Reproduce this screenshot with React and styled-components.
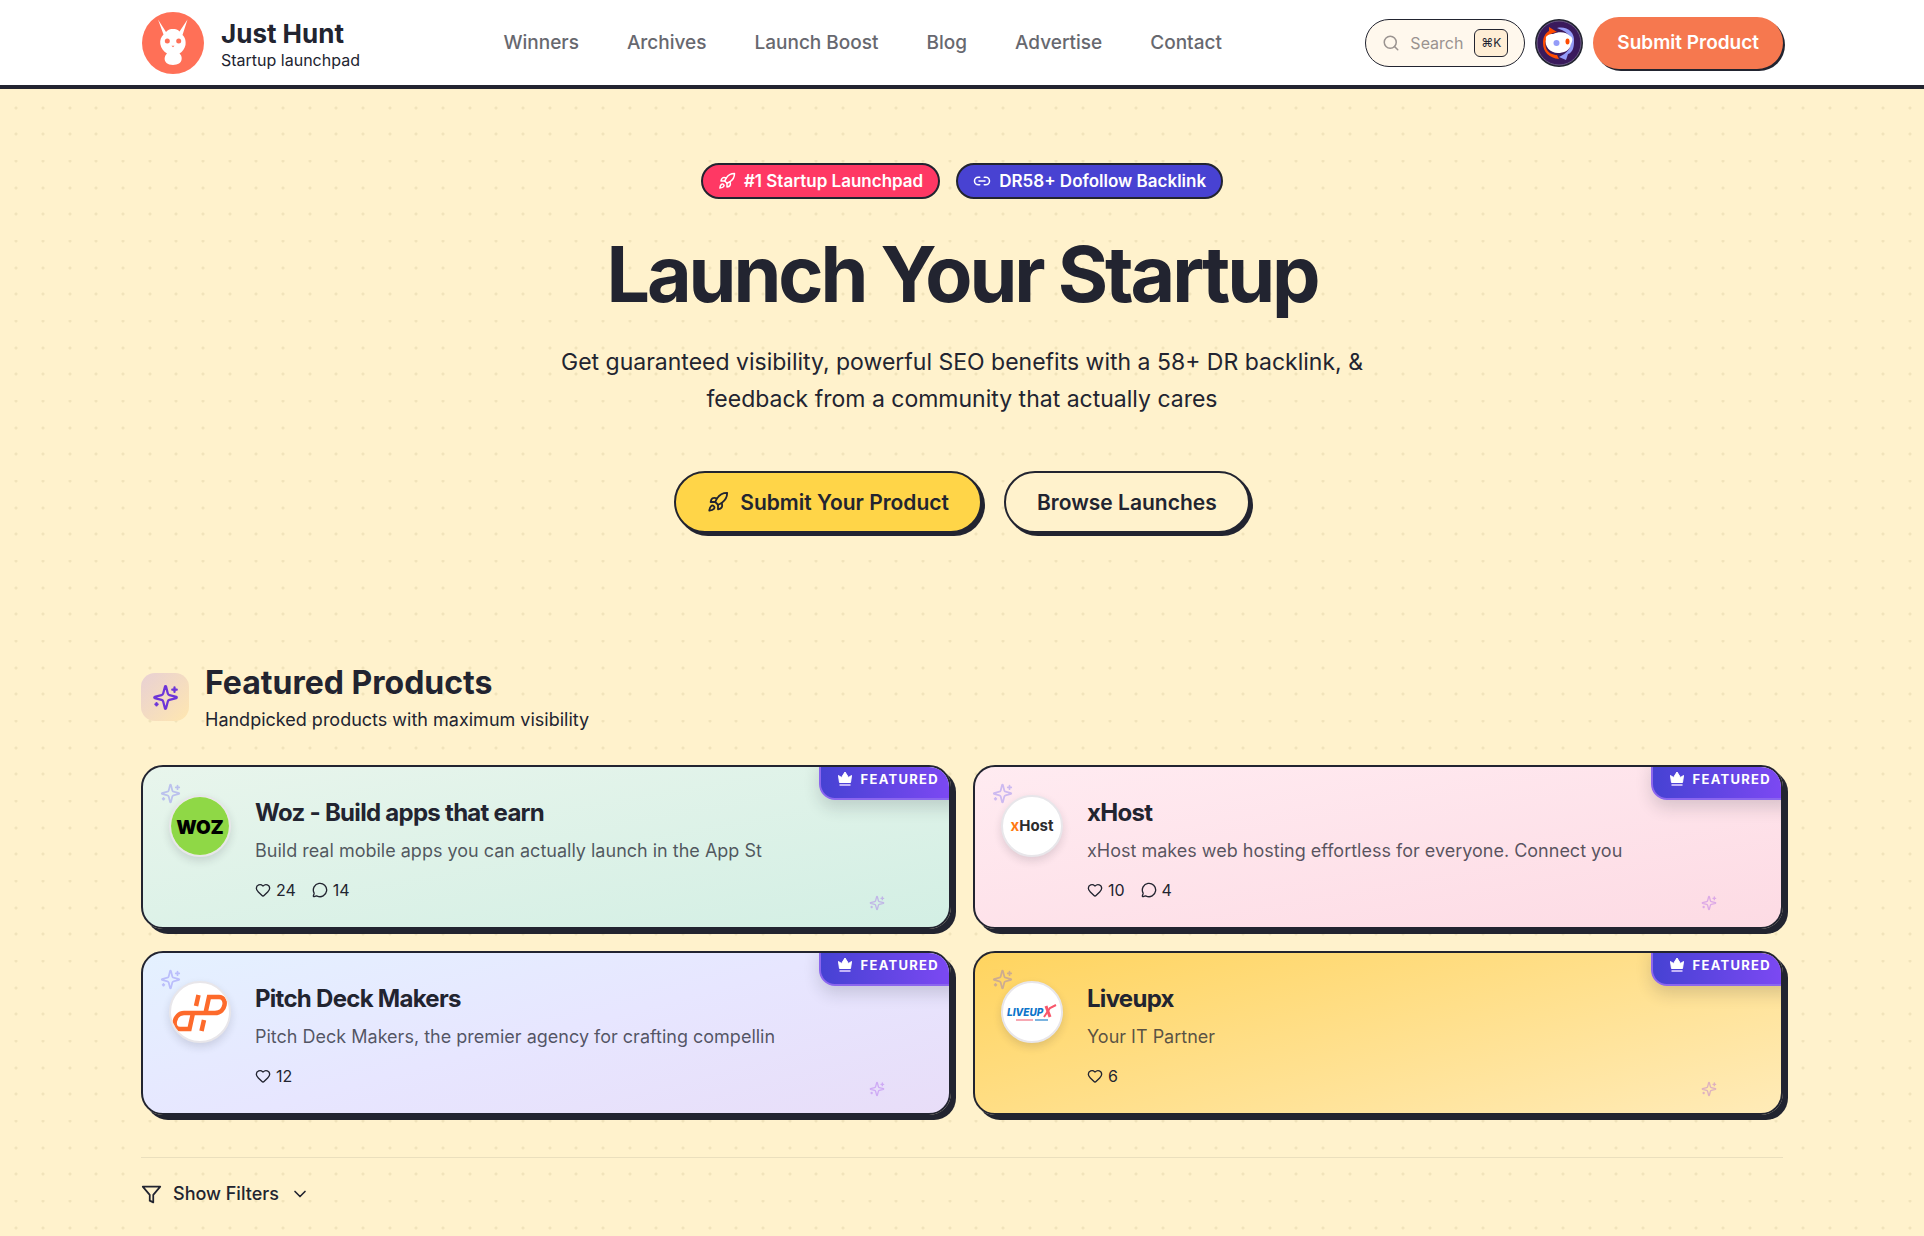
import React from 'react';
import styled, { createGlobalStyle } from 'styled-components';
import { ChevronDown, Heart, Link2, MessageCircle, Rocket, Search } from 'lucide-react';

const ink = '#222430';
const fontStack = "Inter, 'Liberation Sans', sans-serif";

// Three dots per 80px tile in each direction
const dotLayer = [1, 28, 54]
  .flatMap((y) =>
    [16, 43, 70].map(
      (x) =>
        `radial-gradient(circle at ${x}px ${y}px, rgba(120, 100, 40, 0.1) 1px, transparent 2px)`
    )
  )
  .join(',');

const GlobalStyle = createGlobalStyle`
  * {
    box-sizing: border-box;
  }
  body {
    margin: 0;
    min-height: 100vh;
    color: ${ink};
    font-family: ${fontStack};
    background-color: #fff2cc;
    background-image: ${dotLayer};
    background-size: 80px 80px;
    -webkit-font-smoothing: antialiased;
  }
  h1, h2, h3, p, ul {
    margin: 0;
    padding: 0;
  }
  a {
    color: inherit;
    text-decoration: none;
  }
  button, input {
    font-family: inherit;
    color: inherit;
  }
`;

const Container = styled.div`
  width: 100%;
  max-width: 1690px;
  margin: 0 auto;
  padding: 0 24px;
`;

const HeaderStyles = styled.header`
  background: #fff;
  border-bottom: 4px solid ${ink};
`;

const HeaderInner = styled(Container)`
  display: flex;
  align-items: center;
  justify-content: space-between;
  min-height: 85px;
`;

const Brand = styled.a`
  display: flex;
  align-items: center;
  gap: 16px;
  svg {
    width: 64px;
    height: 64px;
  }
`;

const BrandText = styled.span`
  padding-top: 5px;
`;

const BrandName = styled.span`
  display: block;
  font-size: 26px;
  font-weight: 700;
  line-height: 30px;
`;

const BrandTagline = styled.span`
  display: block;
  font-size: 16px;
  line-height: 22px;
`;

const Nav = styled.nav`
  ul {
    display: flex;
    gap: 48px;
    list-style: none;
  }
  a {
    font-size: 19px;
    font-weight: 500;
    color: #67686f;
  }
`;

const HeaderActions = styled.div`
  display: flex;
  align-items: center;
  justify-content: flex-end;
  gap: 10px;
`;

const SearchBox = styled.label`
  display: flex;
  align-items: center;
  width: 160px;
  height: 48px;
  padding: 0 16px;
  color: #9a9390;
  background: #fff8ed;
  border: 1px solid ${ink};
  border-radius: 24px;
  svg {
    flex: none;
  }
  input {
    flex: 1;
    min-width: 0;
    margin-left: 10px;
    padding: 0;
    font-size: 16px;
    color: ${ink};
    background: none;
    border: 0;
    outline: 0;
  }
  input::placeholder {
    color: #9a9390;
    opacity: 1;
  }
  kbd {
    flex: none;
    padding: 0 6px;
    font-family: ${fontStack};
    font-size: 12px;
    line-height: 26px;
    color: ${ink};
    background: #ffeed5;
    border: 1px solid ${ink};
    border-radius: 6px;
  }
`;

const AvatarButton = styled.button`
  width: 48px;
  height: 48px;
  padding: 0;
  background: none;
  border: 0;
  border-radius: 50%;
  svg {
    display: block;
  }
`;

const SubmitLink = styled.a`
  padding: 0 24px;
  font-size: 19px;
  font-weight: 600;
  line-height: 52px;
  white-space: nowrap;
  color: #fff;
  background: #f6784f;
  border-radius: 26px;
  box-shadow: 2px 2px 0 ${ink};
`;

const Hero = styled.section`
  display: flex;
  flex-direction: column;
  align-items: center;
  padding: 74px 0 127px;
  text-align: center;
`;

const HeroBadges = styled.div`
  display: flex;
  gap: 16px;
`;

const HeroBadge = styled.span`
  display: flex;
  align-items: center;
  gap: 8px;
  height: 36px;
  padding: 0 15px;
  font-size: 17px;
  font-weight: 600;
  line-height: 32px;
  color: #fff;
  background: ${(props) => props.$color};
  border: 2px solid ${ink};
  border-radius: 18px;
`;

const HeroTitle = styled.h1`
  margin-top: 32px;
  font-size: 77px;
  font-weight: 700;
  line-height: 86px;
  letter-spacing: -0.04em;
`;

const HeroText = styled.p`
  max-width: 830px;
  margin-top: 27px;
  font-size: 23px;
  line-height: 37px;
`;

const HeroButtons = styled.div`
  display: flex;
  gap: 22px;
  margin-top: 53px;
`;

const HeroButton = styled.a`
  display: flex;
  align-items: center;
  gap: 11px;
  height: 62px;
  padding: 0 31px;
  font-size: 21px;
  font-weight: 600;
  background: ${(props) => (props.$primary ? '#ffd548' : '#fff2cc')};
  border: 2px solid ${ink};
  border-radius: 31px;
  box-shadow: 3px 3px 0 ${ink};
`;

const SectionHead = styled.div`
  display: flex;
  align-items: center;
  gap: 16px;
`;

const SectionIcon = styled.div`
  display: flex;
  align-items: center;
  justify-content: center;
  width: 48px;
  height: 48px;
  color: #6d35d8;
  background: linear-gradient(135deg, #e8d0d4, #ffe7b0);
  border-radius: 14px;
`;

const SectionTitle = styled.h2`
  font-size: 32px;
  font-weight: 700;
  line-height: 46px;
`;

const SectionText = styled.p`
  font-size: 18px;
  line-height: 28px;
`;

const CardGrid = styled.div`
  display: grid;
  grid-template-columns: 1fr 1fr;
  gap: 22px;
  margin-top: 31px;
`;

const Card = styled.article`
  position: relative;
  display: flex;
  gap: 24px;
  min-height: 164px;
  padding: 28px 26px 24px;
  overflow: hidden;
  background: ${(props) => props.$background};
  border: 2px solid ${ink};
  border-radius: 22px;
  box-shadow: 5px 5px 0 ${ink};
`;

const CardLogo = styled.div`
  flex: none;
  width: 62px;
  height: 62px;
  overflow: hidden;
  background: #fff;
  border: 2px solid #e8e6ea;
  border-radius: 50%;
  box-shadow: 0 4px 8px rgba(34, 36, 48, 0.14);
  svg {
    display: block;
  }
`;

const CardBody = styled.div`
  padding-top: 2px;
`;

const CardTitle = styled.h3`
  font-size: 24px;
  font-weight: 700;
  line-height: 32px;
  letter-spacing: -0.03em;
`;

const CardText = styled.p`
  margin-top: 6px;
  font-size: 18px;
  line-height: 32px;
  color: rgba(34, 36, 48, 0.75);
`;

const CardStats = styled.div`
  display: flex;
  gap: 16px;
  margin-top: 12px;
  span {
    display: flex;
    align-items: center;
    gap: 5px;
    font-size: 16px;
    line-height: 22px;
  }
`;

const FeaturedTag = styled.span`
  position: absolute;
  top: -9px;
  right: -12px;
  display: flex;
  align-items: center;
  gap: 8px;
  height: 42px;
  padding: 0 20px 0 16px;
  font-size: 13px;
  font-weight: 700;
  letter-spacing: 0.1em;
  color: #fff;
  background: linear-gradient(90deg, #4642d3, #8049f5);
  border: 2px solid #8b66ee;
  border-radius: 0 0 0 16px;
  box-shadow: 0 8px 16px rgba(34, 36, 48, 0.16);
`;

const TopSparkle = styled.div`
  position: absolute;
  top: 16px;
  left: 17px;
  color: #5b4df0;
  opacity: 0.3;
  svg {
    display: block;
  }
`;

const BottomSparkle = styled(TopSparkle)`
  top: auto;
  right: 64px;
  bottom: 16px;
  left: auto;
  color: #9333ea;
`;

const FilterBar = styled.div`
  margin-top: 42px;
  padding: 22px 0;
  border-top: 1px solid #eadfbd;
`;

const FilterButton = styled.button`
  display: flex;
  align-items: center;
  gap: 11px;
  padding: 0;
  font-size: 18px;
  font-weight: 500;
  line-height: 28px;
  background: none;
  border: 0;
`;

function SparklesIcon({ size }) {
  return (
    <svg
      width={size}
      height={size}
      viewBox="0 0 24 24"
      fill="none"
      stroke="currentColor"
      strokeWidth="2"
      strokeLinecap="round"
      strokeLinejoin="round"
      aria-hidden="true"
    >
      <path d="M9.937 15.500A2 2 0 0 0 8.500 14.063l-6.135-1.582a.5.5 0 0 1 0-.962L8.500 9.936A2 2 0 0 0 9.937 8.500l1.582-6.135a.5.5 0 0 1 .963 0L14.063 8.500A2 2 0 0 0 15.500 9.937l6.135 1.581a.5.5 0 0 1 0 .964L15.500 14.063a2 2 0 0 0-1.437 1.437l-1.582 6.135a.5.5 0 0 1-.963 0z" />
      <path d="M20 3v4 M22 5h-4 M4 17v2 M5 18H3" />
    </svg>
  );
}

function FunnelIcon() {
  return (
    <svg
      width="21"
      height="21"
      viewBox="0 0 24 24"
      fill="none"
      stroke="currentColor"
      strokeWidth="2"
      strokeLinecap="round"
      strokeLinejoin="round"
      aria-hidden="true"
    >
      <polygon points="22 3 2 3 10 12.460 10 19 14 21 14 12.460 22 3" />
    </svg>
  );
}

function RabbitLogo() {
  return (
    <svg viewBox="0 0 64 64" aria-hidden="true">
      <circle cx="32" cy="32" r="31" fill="#ff7057" />
      <path
        fill="#fff"
        d="M17 8.500 L25 21 C27 18.500 29.500 18 32 18 C34.500 18 37 18.500 38.500 20.500 L46.500 8.500 L41.500 24 C44.500 26.500 45 31 44.500 34 C43.500 38 41.500 40.500 38.500 42.500 C42 45.500 41 51 38 52.500 C35 54.500 28 54.500 25.500 52 C22.500 49 23.500 45 26 42.500 C22.500 40.500 20 37 19.300 33 C18.800 29 20 26 22.500 23.500 Z"
      />
      <circle cx="26.300" cy="30" r="2.500" fill="#ff7057" />
      <circle cx="37.700" cy="30" r="2.500" fill="#ff7057" />
      <path d="M30.500 34.800 h3 L32 36.200 Z" fill="#ff7057" />
    </svg>
  );
}

function AvatarArt() {
  return (
    <svg width="48" height="48" viewBox="0 0 48 48" aria-hidden="true">
      <circle cx="24" cy="24" r="24" fill="#222430" />
      <circle cx="24" cy="24" r="22" fill="#3a1a5c" stroke="#6b5a86" />
      <path
        d="M14 8 L22 13 C12 14 9 22 11 29 C13 34 18 36 22 36 L24 40 C14 39 8 33 8 24 C8 17 11 14 14 12 Z"
        fill="#ff4b00"
      />
      <path
        d="M22 9 C32 7 40 13 39 23 C39 29 37 34 33 35 L31 41 L24 38 C32 34 36 30 36 22 C35 15 30 12 22 9 Z"
        fill="#949cf8"
      />
      <path
        d="M11 20 C10 17 14 15 18 15 C24 12 32 13 35 17 C39 19 37 23 36 25 C35 32 28 34 23 34 C15 34 9 27 11 20 Z"
        fill="#fff"
      />
      <circle cx="21.500" cy="24" r="3" fill="#949cf8" />
      <ellipse cx="32.500" cy="22.500" rx="2" ry="3" fill="#ff4b00" />
    </svg>
  );
}

function CrownIcon() {
  return (
    <svg width="16" height="16" viewBox="0 0 16 16" aria-hidden="true">
      <path
        d="M1.500 4.500 L4.500 6.500 L8 1 L11.500 6.500 L14.500 4.500 L13.500 11.500 H2.500 Z"
        fill="#fff"
        stroke="#fff"
        strokeLinejoin="round"
      />
      <rect x="2.500" y="13" width="11" height="2" fill="#c3b5f7" />
    </svg>
  );
}

function WozLogo() {
  return (
    <svg width="58" height="58" viewBox="0 0 58 58" aria-hidden="true">
      <rect width="58" height="58" fill="#8fd846" />
      <text
        x="29"
        y="37"
        textAnchor="middle"
        fontFamily={fontStack}
        fontSize="19"
        fontWeight="900"
      >
        WOZ
      </text>
    </svg>
  );
}

function XHostLogo() {
  return (
    <svg width="58" height="58" viewBox="0 0 58 58" aria-hidden="true">
      <text
        x="29"
        y="34"
        textAnchor="middle"
        fontFamily={fontStack}
        fontSize="15"
        fontWeight="700"
        fill="#2b2b2d"
      >
        <tspan fill="#ff7a12">x</tspan>Host
      </text>
    </svg>
  );
}

function PitchLogo() {
  return (
    <svg width="58" height="58" viewBox="0 0 58 58" aria-hidden="true">
      <g fill="none" stroke="#fd6a2b" strokeWidth="4.500">
        <path d="M34.500 30 L38 14 H48 C57 14 55 30 44 30 H13 C3 30 0 46 9 46 H18.500 L22 30" />
        <path d="M27.500 12 L25 23" />
        <path d="M33 37 L30.500 48" />
      </g>
    </svg>
  );
}

function LiveupxLogo() {
  return (
    <svg width="58" height="58" viewBox="0 0 58 58" aria-hidden="true">
      <text
        x="4"
        y="33"
        fontFamily={fontStack}
        fontSize="10"
        fontWeight="800"
        fontStyle="italic"
        fill="#0b74c9"
      >
        LIVEUP
      </text>
      <path d="M41 34 L47 25 L53 22" stroke="#f8576b" strokeWidth="2" fill="none" />
      <path d="M43 23 L47 34" stroke="#f8576b" strokeWidth="3" fill="none" />
      <path d="M13 37 h17" stroke="#f58b9a" strokeWidth="1.500" />
      <path d="M32 37 h13" stroke="#4f9bd6" strokeWidth="1.500" />
    </svg>
  );
}

const navItems = ['Winners', 'Archives', 'Launch Boost', 'Blog', 'Advertise', 'Contact'];

const products = [
  {
    name: 'Woz - Build apps that earn',
    text: 'Build real mobile apps you can actually launch in the App St',
    likes: 24,
    comments: 14,
    logo: <WozLogo />,
    background: 'linear-gradient(170deg, #e8f5ec, #d3efe4)',
  },
  {
    name: 'xHost',
    text: 'xHost makes web hosting effortless for everyone. Connect you',
    likes: 10,
    comments: 4,
    logo: <XHostLogo />,
    background: 'linear-gradient(170deg, #ffebf1, #fddbe4)',
  },
  {
    name: 'Pitch Deck Makers',
    text: 'Pitch Deck Makers, the premier agency for crafting compellin',
    likes: 12,
    logo: <PitchLogo />,
    background: 'linear-gradient(165deg, #e4f1ff, #e7e6ff 50%, #e8ddf8)',
  },
  {
    name: 'Liveupx',
    text: 'Your IT Partner',
    likes: 6,
    logo: <LiveupxLogo />,
    background: 'linear-gradient(165deg, #ffd45f, #ffebb8)',
  },
];

function ProductCard({ product }) {
  return (
    <Card $background={product.background}>
      <TopSparkle>
        <SparklesIcon size={21} />
      </TopSparkle>
      <BottomSparkle>
        <SparklesIcon size={16} />
      </BottomSparkle>
      <FeaturedTag>
        <CrownIcon />
        FEATURED
      </FeaturedTag>
      <CardLogo>{product.logo}</CardLogo>
      <CardBody>
        <CardTitle>{product.name}</CardTitle>
        <CardText>{product.text}</CardText>
        <CardStats>
          <span>
            <Heart size={16} aria-hidden="true" />
            {product.likes}
          </span>
          {product.comments && (
            <span>
              <MessageCircle size={16} aria-hidden="true" />
              {product.comments}
            </span>
          )}
        </CardStats>
      </CardBody>
    </Card>
  );
}

export default function App() {
  return (
    <>
      <GlobalStyle />
      <HeaderStyles>
        <HeaderInner>
          <Brand href="/">
            <RabbitLogo />
            <BrandText>
              <BrandName>Just Hunt</BrandName>
              <BrandTagline>Startup launchpad</BrandTagline>
            </BrandText>
          </Brand>
          <Nav>
            <ul>
              {navItems.map((item) => (
                <li key={item}>
                  <a href={`/${item.toLowerCase().replace(' ', '-')}`}>{item}</a>
                </li>
              ))}
            </ul>
          </Nav>
          <HeaderActions>
            <SearchBox>
              <Search size={18} aria-hidden="true" />
              <input type="text" placeholder="Search" aria-label="Search" />
              <kbd>⌘K</kbd>
            </SearchBox>
            <AvatarButton type="button" aria-label="Account">
              <AvatarArt />
            </AvatarButton>
            <SubmitLink href="/submit">Submit Product</SubmitLink>
          </HeaderActions>
        </HeaderInner>
      </HeaderStyles>
      <Container as="main">
        <Hero>
          <HeroBadges>
            <HeroBadge $color="#ff3864">
              <Rocket size={18} aria-hidden="true" />
              #1 Startup Launchpad
            </HeroBadge>
            <HeroBadge $color="#4842d2">
              <Link2 size={18} aria-hidden="true" />
              DR58+ Dofollow Backlink
            </HeroBadge>
          </HeroBadges>
          <HeroTitle>Launch Your Startup</HeroTitle>
          <HeroText>
            Get guaranteed visibility, powerful SEO benefits with a 58+ DR backlink, &amp; feedback
            from a community that actually cares
          </HeroText>
          <HeroButtons>
            <HeroButton href="/submit" $primary>
              <Rocket size={22} aria-hidden="true" />
              Submit Your Product
            </HeroButton>
            <HeroButton href="/launches">Browse Launches</HeroButton>
          </HeroButtons>
        </Hero>
        <section>
          <SectionHead>
            <SectionIcon>
              <SparklesIcon size={27} />
            </SectionIcon>
            <div>
              <SectionTitle>Featured Products</SectionTitle>
              <SectionText>Handpicked products with maximum visibility</SectionText>
            </div>
          </SectionHead>
          <CardGrid>
            {products.map((product) => (
              <ProductCard key={product.name} product={product} />
            ))}
          </CardGrid>
        </section>
        <FilterBar>
          <FilterButton type="button">
            <FunnelIcon />
            Show Filters
            <ChevronDown size={20} aria-hidden="true" />
          </FilterButton>
        </FilterBar>
      </Container>
    </>
  );
}
